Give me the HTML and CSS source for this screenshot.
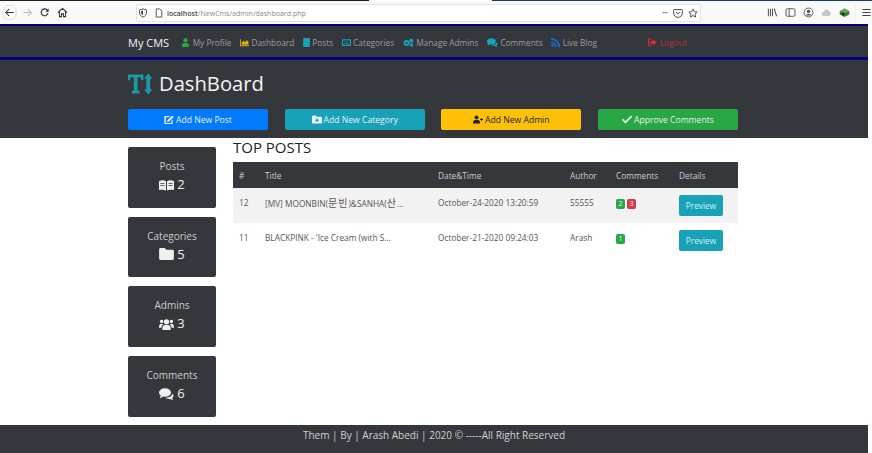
FILE: index.html
```html
<!DOCTYPE html>
<html lang="en">
<head>
    <meta charset="UTF-8">
    <meta name="viewport" content="width=device-width, initial-scale=1.0">
    <title>Dashboard</title>
    <link rel="stylesheet" href="styles.css">
</head>
<body>
    <svg class="sprite" width="0" height="0">
        <symbol id="i-user" viewBox="0 0 16 16"><circle cx="8" cy="4" r="3.8"/><path d="M2 16v-3.5C2 10 4 8.8 5.5 8.8h5C12 8.8 14 10 14 12.5V16z"/></symbol>
        <symbol id="i-chart" viewBox="0 0 16 16"><path d="M0 2h1.6v11H16v1.5H0z"/><path d="M3 12V8l3-3 3 2 3-3 3 2v6z"/></symbol>
        <symbol id="i-post" viewBox="0 0 12 16"><path d="M0 1.5C0 .7.7 0 1.5 0h9c.8 0 1.5.7 1.5 1.5v13c0 .8-.7 1.5-1.5 1.5h-9C.7 16 0 15.3 0 14.5z"/></symbol>
        <symbol id="i-list" viewBox="0 0 16 16"><path fill-rule="evenodd" d="M0 2h16v12H0zM2 4v8h12V4z"/><path d="M4 6h8v1H4zM4 9h8v1H4z"/></symbol>
        <symbol id="i-cogs" viewBox="0 0 20 16"><circle cx="6.5" cy="9" r="5.5"/><circle cx="15" cy="5" r="3.8"/><circle cx="15.5" cy="12.5" r="3.3"/><circle cx="6.5" cy="9" r="1.8" fill="#34383d"/></symbol>
        <symbol id="i-comments" viewBox="0 0 20 16"><ellipse cx="8" cy="6" rx="8" ry="5.8"/><path d="M2.5 9.5 1 14l5-3z"/><path d="M18 7c2 2.5 1.5 5-.5 6.5L19 16l-5-1.5c-2 .2-4-.2-5.500-1.500C13 13 17.500 11 18 7z"/></symbol>
        <symbol id="i-rss" viewBox="0 0 16 16"><circle cx="2.5" cy="13.5" r="2.3"/><path d="M0 6v3a7 7 0 0 1 7 7h3A10 10 0 0 0 0 6z"/><path d="M0 0v3a13 13 0 0 1 13 13h3A16 16 0 0 0 0 0z"/></symbol>
        <symbol id="i-logout" viewBox="0 0 16 14"><path d="M5.5 0h-3A2.5 2.5 0 0 0 0 2.5v9A2.5 2.5 0 0 0 2.5 14h3v-2h-3a.5.5 0 0 1-.5-.5v-9a.5.5 0 0 1 .5-.5h3z"/><path d="M9 1.5 16 7l-7 5.5v-3H4v-5h5z"/></symbol>
        <symbol id="i-edit" viewBox="0 0 16 14"><path d="M1.500 1.500h8l-2 2H3v9h9V8.500l2-2v6.500a1 1 0 0 1-1 1H1.500a1 1 0 0 1-1-1V2.500a1 1 0 0 1 1-1z"/><path d="M13 .5 15.500 3 8 10.500l-3 .5.500-3z"/></symbol>
        <symbol id="i-folder-plus" viewBox="0 0 16 13"><path fill-rule="evenodd" d="M1.5 0H6l2 2h6.5A1.500 1.500 0 0 1 16 3.500v8a1.500 1.500 0 0 1-1.500 1.500h-13A1.500 1.500 0 0 1 0 11.500v-10A1.500 1.500 0 0 1 1.500 0zM7 5v2H5v1.500h2v2h2v-2h2V7H9V5z"/></symbol>
        <symbol id="i-user-plus" viewBox="0 0 20 16"><circle cx="7" cy="4" r="4"/><path d="M0 16v-2.500C0 11 2 9 4.500 9h5C12 9 14 11 14 13.500V16z"/><path d="M16 5h1.500v2H20v1.800h-2.500V11H16V8.800h-2V7h2z"/></symbol>
        <symbol id="i-check" viewBox="0 0 16 12"><path d="M1.500 5 0 6.500 5.500 12 16 1.500 14.500 0 5.500 9z" stroke="currentColor"/></symbol>
        <symbol id="i-book" viewBox="0 0 22 16"><path fill-rule="evenodd" d="M0 2.500C3 .5 7.500.5 10.300 2.500V16C7.500 14.500 3 14.500 0 15.500zM2 5.500v1h6v-1zM2 8.500v1h6v-1zM11.700 2.500C14.500.5 19 .5 22 2.500V15.500C19 14.500 14.500 14.500 11.700 16zM14 5.500v1h6v-1zM14 8.500v1h6v-1z"/></symbol>
        <symbol id="i-folder" viewBox="0 0 16 13"><path d="M1.5 0H6l2 2h6.500A1.500 1.500 0 0 1 16 3.500v8a1.500 1.500 0 0 1-1.500 1.500h-13A1.500 1.500 0 0 1 0 11.500v-10A1.500 1.500 0 0 1 1.500 0z"/></symbol>
        <symbol id="i-users" viewBox="0 0 20 16"><circle cx="10" cy="5" r="3.5"/><circle cx="3.5" cy="4.5" r="2.3"/><circle cx="16.5" cy="4.5" r="2.3"/><path d="M4.500 16v-3c0-2.500 2-3.800 3.500-3.800h4c1.500 0 3.500 1.300 3.500 3.800v3z"/><path d="M0 11.500C0 9 1.500 7.500 3.500 7.500c1 0 1.700.3 2.200.8-1.500 1-2.500 2.500-2.500 4.700H0zM20 11.500C20 9 18.500 7.500 16.500 7.500c-1 0-1.700.3-2.200.8 1.500 1 2.500 2.500 2.500 4.700H20z"/></symbol>
    </svg>

    <div class="tabstrip">
        <div class="tab-dark"></div>
        <div class="tab-blue"></div>
    </div>
    <div class="toolbar">
        <div class="nav-buttons">
            <span class="back-circle">
                <svg class="tool-icon" viewBox="0 0 16 16"><path d="M14 8H3M7.5 3l-5 5 5 5" fill="none" stroke="#333" stroke-width="1.5"/></svg>
            </span>
            <svg class="tool-icon" viewBox="0 0 16 16"><path d="M2 8h11M8.5 3l5 5-5 5" fill="none" stroke="#bbb" stroke-width="1.5"/></svg>
            <svg class="tool-icon" viewBox="0 0 16 16"><path d="M13 9a5 5 0 1 1-1.5-5L13 5.5" fill="none" stroke="#333" stroke-width="1.7"/><path d="M14 2v5H9z" fill="#333"/></svg>
            <svg class="tool-icon" viewBox="0 0 16 16"><path d="M1.5 8 8 2l6.5 6M3.5 7v7h3v-4h3v4h3V7" fill="none" stroke="#333" stroke-width="1.5"/></svg>
        </div>
        <div class="urlbar">
            <svg class="url-icon" viewBox="0 0 16 16"><path d="M8 1.5 2.500 3v5c0 3 2.500 5.500 5.500 6.500 3-1 5.500-3.500 5.500-6.500V3z" fill="none" stroke="#444" stroke-width="1.5"/><path d="M8 4 5 5v3c0 1.500 1.500 3 3 3.500z" fill="#444"/></svg>
            <svg class="url-icon page-icon" viewBox="0 0 16 16"><path d="M3.5 1.5h6l3 3v10h-9z" fill="none" stroke="#444" stroke-width="1.4"/></svg>
            <span class="url-text"><b>localhost</b>/NewCms/admin/dashboard.php</span>
            <span class="url-actions">
                <span class="dots">•••</span>
                <svg class="url-icon" viewBox="0 0 16 16"><path d="M2 2.5h12a1 1 0 0 1 1 1V8a7 7 0 0 1-14 0V3.500a1 1 0 0 1 1-1z" fill="none" stroke="#444" stroke-width="1.5"/><path d="M5 6.5l3 3 3-3" fill="none" stroke="#444" stroke-width="1.5"/></svg>
                <svg class="url-icon" viewBox="0 0 16 16"><path d="M8 1.5 10 6l4.800.5-3.600 3.200 1 4.800L8 12l-4.200 2.500 1-4.800L1.200 6.500 6 6z" fill="none" stroke="#444" stroke-width="1.4"/></svg>
            </span>
        </div>
        <div class="tool-right">
            <svg class="tool-icon" viewBox="0 0 16 16"><path d="M2 2.5v11M5 2.5v11M8 2.5v11M10.5 2.5l3.5 11" fill="none" stroke="#555" stroke-width="1.5"/></svg>
            <svg class="tool-icon" viewBox="0 0 16 16"><rect x="1.5" y="2.5" width="13" height="11" rx="2" fill="none" stroke="#555" stroke-width="1.4"/><path d="M6 3v10" stroke="#555" stroke-width="1.4"/></svg>
            <svg class="tool-icon" viewBox="0 0 16 16"><circle cx="8" cy="8" r="6.5" fill="none" stroke="#555" stroke-width="1.3"/><circle cx="8" cy="6.5" r="2.5" fill="#555"/><path d="M3.5 12.5c1-3 8-3 9 0z" fill="#555"/></svg>
            <svg class="tool-icon" viewBox="0 0 16 16"><path d="M4 13a3 3 0 0 1 0-6 4.500 4.500 0 0 1 8.500-.5A3.500 3.500 0 0 1 12 13z" fill="#c4c8c8"/></svg>
            <svg class="tool-icon" viewBox="0 0 16 16"><path d="M8 2l7 4v5l-7 3.500L1 11V6z" fill="#3c7a30"/><path d="M8 2l7 4-7 3-7-3z" fill="#6aa84f"/><circle cx="6" cy="10" r="2" fill="#222"/></svg>
            <span class="divider"></span>
            <svg class="tool-icon" viewBox="0 0 16 16"><path d="M2 3.5h12M2 8h12M2 12.500h12" stroke="#444" stroke-width="1.5"/></svg>
        </div>
    </div>

    <div class="page">
        <nav class="navbar">
            <div class="wrap nav-inner">
                <span class="brand">My CMS</span>
                <a class="nav-link"><svg class="ic c-green"><use href="#i-user"/></svg>My Profile</a>
                <a class="nav-link"><svg class="ic c-yellow"><use href="#i-chart"/></svg>Dashboard</a>
                <a class="nav-link"><svg class="ic ic-thin c-teal"><use href="#i-post"/></svg>Posts</a>
                <a class="nav-link"><svg class="ic c-teal"><use href="#i-list"/></svg>Categories</a>
                <a class="nav-link"><svg class="ic ic-wide c-teal"><use href="#i-cogs"/></svg>Manage Admins</a>
                <a class="nav-link"><svg class="ic ic-wide c-teal"><use href="#i-comments"/></svg>Comments</a>
                <a class="nav-link"><svg class="ic c-blue"><use href="#i-rss"/></svg>Live Blog</a>
                <a class="nav-link logout"><svg class="ic c-red"><use href="#i-logout"/></svg>Logout</a>
            </div>
        </nav>

        <header class="header">
            <div class="wrap">
                <h1 class="title">
                    <svg class="title-icon" viewBox="0 0 26 22"><path d="M1 1h15v6h-2l-1-3h-3v14h2v3H4v-3h2V4H3L2 7H0V1z"/><path d="M21 0l4.5 5.5H23v11h2.500L21 22l-4.500-5.500H19v-11h-2.500z"/></svg>
                    DashBoard
                </h1>
                <div class="actions">
                    <a class="btn btn-blue"><svg class="btn-ic"><use href="#i-edit"/></svg>Add New Post</a>
                    <a class="btn btn-teal"><svg class="btn-ic"><use href="#i-folder-plus"/></svg>Add New Category</a>
                    <a class="btn btn-yellow"><svg class="btn-ic"><use href="#i-user-plus"/></svg>Add New Admin</a>
                    <a class="btn btn-green"><svg class="btn-ic"><use href="#i-check"/></svg>Approve Comments</a>
                </div>
            </div>
        </header>

        <main class="wrap content">
            <aside class="stats">
                <div class="stat"><span class="stat-name">Posts</span><span class="stat-num"><svg class="stat-ic"><use href="#i-book"/></svg>2</span></div>
                <div class="stat"><span class="stat-name">Categories</span><span class="stat-num"><svg class="stat-ic"><use href="#i-folder"/></svg>5</span></div>
                <div class="stat"><span class="stat-name">Admins</span><span class="stat-num"><svg class="stat-ic"><use href="#i-users"/></svg>3</span></div>
                <div class="stat"><span class="stat-name">Comments</span><span class="stat-num"><svg class="stat-ic"><use href="#i-comments"/></svg>6</span></div>
            </aside>
            <section class="posts">
                <h2 class="posts-title">TOP POSTS</h2>
                <table class="table">
                    <thead>
                        <tr>
                            <th class="col-id">#</th>
                            <th class="col-title">Title</th>
                            <th class="col-date">Date&amp;Time</th>
                            <th class="col-author">Author</th>
                            <th class="col-comments">Comments</th>
                            <th class="col-details">Details</th>
                        </tr>
                    </thead>
                    <tbody>
                        <tr class="odd">
                            <td>12</td>
                            <td>[MV] MOONBIN(<span class="hangul">문빈</span>)&amp;SANHA(<span class="hangul">산</span>...</td>
                            <td>October-24-2020 13:20:59</td>
                            <td>55555</td>
                            <td><span class="badge b-green">2</span><span class="badge b-red">3</span></td>
                            <td><a class="preview">Preview</a></td>
                        </tr>
                        <tr>
                            <td>11</td>
                            <td>BLACKPINK - 'Ice Cream (with S...</td>
                            <td>October-21-2020 09:24:03</td>
                            <td>Arash</td>
                            <td><span class="badge b-green">1</span></td>
                            <td><a class="preview">Preview</a></td>
                        </tr>
                    </tbody>
                </table>
            </section>
        </main>

        <footer class="footer">Them | By | Arash Abedi | 2020 © -----All Right Reserved</footer>
    </div>
</body>
</html>
```

FILE: styles.css
```css
body {
    margin: 0;
    height: 453px;
    overflow: hidden;
    background: #fff;
    font-family: "Open Sans", "Noto Sans CJK KR", sans-serif;
    color: #444;
}
a {
    text-decoration: none;
}
.sprite {
    display: block;
    height: 0;
}

/* browser chrome */
.tabstrip {
    display: flex;
    justify-content: space-between;
    height: 1px;
}
.tab-dark {
    width: 369px;
    background: #1d1d26;
}
.tab-blue {
    width: 380px;
    background: #1c3a5a;
}
.toolbar {
    display: flex;
    align-items: center;
    height: 23px;
    background: #f9f9fa;
}
.tool-icon {
    width: 11px;
    height: 11px;
    flex-shrink: 0;
}
.nav-buttons {
    display: flex;
    align-items: center;
    gap: 6.5px;
    width: 136px;
    padding-left: 2px;
    box-sizing: border-box;
}
.back-circle {
    display: flex;
    align-items: center;
    justify-content: center;
    width: 15px;
    height: 15px;
    margin-right: -2px;
    box-sizing: border-box;
    background: #fff;
    border: 1px solid #ddd;
    border-radius: 50%;
}
.urlbar {
    display: flex;
    align-items: center;
    width: 565px;
    height: 18px;
    padding: 0 2px 0 1px;
    box-sizing: border-box;
    background: #fff;
    border: 1px solid #e2e2e2;
    border-radius: 2px;
}
.url-icon {
    width: 10px;
    height: 10px;
    color: #444;
}
.page-icon {
    margin-left: 6px;
    margin-right: 3px;
}
.url-text {
    font-size: 7.05px;
    color: #888;
}
.url-text b {
    font-weight: 600;
    color: #444;
}
.url-actions {
    display: flex;
    align-items: center;
    gap: 5px;
    margin-left: auto;
}
.dots {
    font-size: 5px;
    color: #444;
}
.tool-right {
    display: flex;
    align-items: center;
    gap: 7px;
    margin-left: auto;
    padding-right: 0.5px;
}
.divider {
    width: 1px;
    height: 18px;
    margin: 0 -2px;
    background: #eee;
}

/* page */
.page {
    width: 868px;
}
.wrap {
    width: 610px;
    margin-left: 128px;
}
.navbar {
    height: 36px;
    box-sizing: border-box;
    background: #34383d;
    border-top: 2px solid #00007f;
    border-bottom: 3px solid #00007f;
}
.nav-inner {
    display: flex;
    align-items: center;
    height: 31px;
    padding-top: 1px;
    box-sizing: border-box;
}
.brand {
    margin-right: 12px;
    font-size: 11px;
    color: #f2f2f2;
}
.nav-link {
    display: flex;
    align-items: center;
    gap: 2.5px;
    margin-right: 8.5px;
    font-size: 8.3px;
    color: #9b9d9f;
    white-space: nowrap;
}
.logout {
    margin-left: 43px;
    color: #b8303e;
}
.ic {
    width: 9px;
    height: 9px;
    fill: currentColor;
}
.ic-thin {
    width: 7px;
}
.ic-wide {
    width: 11px;
}
.c-green { color: #28a745; }
.c-yellow { color: #d9ac1c; }
.c-teal { color: #17a2b8; }
.c-blue { color: #1a6ee0; }
.c-red { color: #d42a3c; }

.header {
    height: 78px;
    box-sizing: border-box;
    padding-top: 9px;
    background: #34383d;
}
.title {
    display: flex;
    align-items: center;
    gap: 6px;
    height: 29px;
    margin: 0 0 11px;
    font-size: 20.2px;
    font-weight: 400;
    line-height: 29px;
    color: #f4f4f4;
}
.title-icon {
    width: 25px;
    height: 22px;
    fill: #1c98aa;
}
.actions {
    display: grid;
    grid-template-columns: repeat(4, 140px);
    justify-content: space-between;
}
.btn {
    display: flex;
    align-items: center;
    justify-content: center;
    gap: 2px;
    height: 21px;
    border-radius: 2px;
    font-size: 8.6px;
    color: #e8eef2;
}
.btn-ic {
    width: 10px;
    height: 9px;
    fill: currentColor;
}
.btn-blue { background: #007bff; }
.btn-teal { background: #17a2b8; }
.btn-yellow { background: #ffc107; color: #212529; }
.btn-green { background: #28a745; }

.content {
    display: flex;
    gap: 17px;
    height: 287px;
    box-sizing: border-box;
    padding-top: 9px;
}
.stats {
    display: flex;
    flex-direction: column;
    gap: 9px;
    width: 88px;
    flex-shrink: 0;
}
.stat {
    display: flex;
    flex-direction: column;
    align-items: center;
    gap: 3px;
    height: 60.7px;
    box-sizing: border-box;
    padding-top: 12px;
    background: #34383d;
    border-radius: 2px;
}
.stat-name {
    font-size: 10px;
    line-height: 14px;
    color: #c9cbcd;
}
.stat-num {
    display: flex;
    align-items: center;
    gap: 3px;
    font-size: 13px;
    line-height: 17px;
    color: #f0f0f0;
}
.stat-ic {
    width: 15px;
    height: 12px;
    fill: #f0f0f0;
}

.posts {
    flex: 1;
    margin-top: -9px;
}
.posts-title {
    margin: 0;
    height: 24px;
    font-size: 15px;
    font-weight: 400;
    line-height: 18px;
    color: #222;
}
.table {
    width: 100%;
    border-collapse: collapse;
    table-layout: fixed;
    font-size: 8.3px;
}
.table th {
    height: 26px;
    padding: 0 0 0 6px;
    background: #34383d;
    color: #c9cbcd;
    font-weight: 400;
    text-align: left;
}
.table td {
    height: 35px;
    padding: 0 0 6px 6px;
    box-sizing: border-box;
    color: #555;
}
.odd {
    background: #f2f2f2;
}
.hangul {
    font-size: 10px;
    letter-spacing: 1px;
}
.col-id { width: 20px; }
.col-title { width: 167px; }
.col-date { width: 126px; }
.col-author { width: 40px; }
.col-comments { width: 57px; }
.badge {
    display: inline-block;
    width: 9px;
    height: 10px;
    margin-right: 2px;
    border-radius: 2px;
    font-size: 7px;
    line-height: 10px;
    text-align: center;
    color: #f2f6f2;
}
.b-green { background: #28a745; }
.b-red { background: #dc3545; }
.preview {
    position: relative;
    top: 3px;
    display: block;
    width: 44px;
    height: 21px;
    border-radius: 2px;
    background: #17a2b8;
    color: #d6eef2;
    font-size: 8.3px;
    line-height: 21px;
    text-align: center;
}
.footer {
    height: 28px;
    background: #34383d;
    font-size: 10px;
    line-height: 20px;
    text-align: center;
    color: #d0d2d4;
}
```
